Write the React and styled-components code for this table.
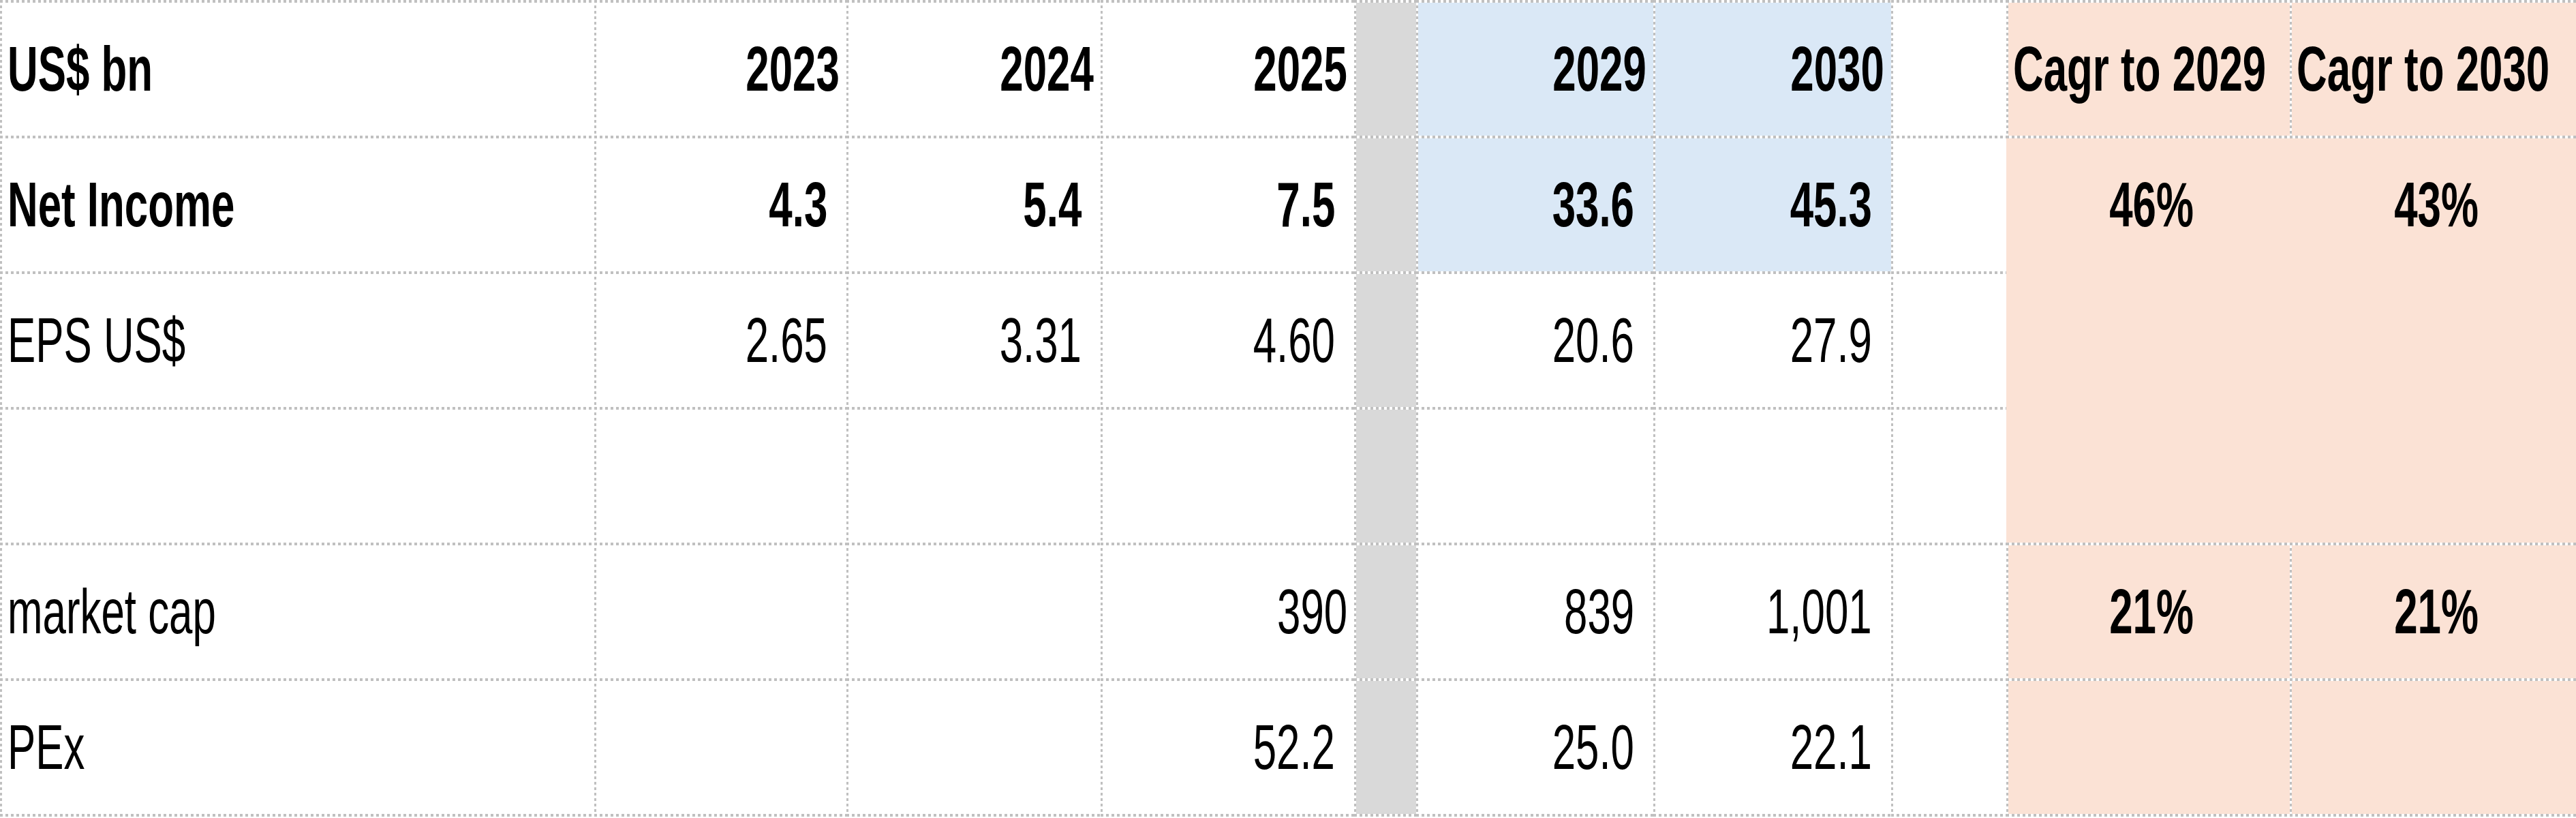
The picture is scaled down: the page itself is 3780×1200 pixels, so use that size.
import React from 'react';
import styled, { createGlobalStyle } from 'styled-components';

const GlobalStyle = createGlobalStyle`
  html, body {
    margin: 0;
    padding: 0;
    background: #fff;
  }
`;

const LINE = '#c0c0c0';

const fills = {
  white: '#ffffff',
  gray: '#d9d9d9',
  blue: '#dae8f6',
  salmon: '#fbe2d5',
};

const justify = {
  left: 'flex-start',
  right: 'flex-end',
  center: 'center',
};

const hLine = (pos) =>
  `repeating-linear-gradient(90deg, ${LINE} 0 4px, #fff 4px 8px) ${pos} left / 100% 4px no-repeat`;
const vLine = `repeating-linear-gradient(180deg, ${LINE} 0 4px, #fff 4px 8px) top left / 3px 100% no-repeat`;

const Sheet = styled.div`
  display: grid;
  grid-template-columns: 872px 370px 373px 372px 91px 348px 349px 169px 416px 420px;
  grid-template-rows: repeat(5, 199px) 203px;
  width: 3780px;
  font-family: 'Liberation Sans', Arial, sans-serif;
  color: #000;
`;

const Cell = styled.div`
  display: flex;
  align-items: center;
  justify-content: ${(p) => justify[p.$align]};
  box-sizing: border-box;
  padding: 4px ${(p) => p.$pr}px ${(p) => (p.$bottom ? 4 : 0)}px ${(p) => p.$pl}px;
  overflow: visible;
  background: ${(p) =>
    [
      p.$top && hLine('top'),
      p.$bottom && hLine('bottom'),
      p.$left && vLine,
      fills[p.$fill],
    ]
      .filter(Boolean)
      .join(', ')};
`;

const Txt = styled.span`
  display: inline-block;
  white-space: nowrap;
  font-size: 93px;
  line-height: 1;
  font-weight: ${(p) => (p.$bold ? 700 : 400)};
  transform: scaleX(0.665);
  transform-origin: ${(p) => p.$align} center;
`;

const rows = [
  {
    label: 'US$ bn',
    bold: true,
    hist: ['2023', '2024', '2025'],
    fc: ['2029', '2030'],
    blue: true,
    pad: 10,
    cagr: ['Cagr to 2029', 'Cagr to 2030'],
    cagrAlign: 'left',
    salmon: 'full',
  },
  {
    label: 'Net Income',
    bold: true,
    hist: ['4.3', '5.4', '7.5'],
    fc: ['33.6', '45.3'],
    blue: true,
    pad: 28,
    cagr: ['46%', '43%'],
    salmon: 'top',
  },
  {
    label: 'EPS US$',
    hist: ['2.65', '3.31', '4.60'],
    fc: ['20.6', '27.9'],
    pad: 28,
    salmon: 'none',
  },
  {
    label: '',
    hist: ['', '', ''],
    fc: ['', ''],
    pad: 28,
    salmon: 'none',
  },
  {
    label: 'market cap',
    hist: ['', '', '390'],
    histPad: 10,
    fc: ['839', '1,001'],
    pad: 28,
    cagr: ['21%', '21%'],
    cagrBold: true,
    salmon: 'full',
  },
  {
    label: 'PEx',
    hist: ['', '', '52.2'],
    fc: ['25.0', '22.1'],
    pad: 28,
    salmon: 'full',
  },
];

const SheetCell = ({ text, align = 'right', bold, fill = 'white', pl = 11, pr = 10, top = true, left = true, bottom }) => (
  <Cell $align={align} $fill={fill} $pl={pl} $pr={pr} $top={top} $left={left} $bottom={bottom}>
    {text ? (
      <Txt $align={align} $bold={bold}>
        {text}
      </Txt>
    ) : null}
  </Cell>
);

const Row = ({ row, last }) => {
  const cagr = row.cagr || ['', ''];
  const cagrAlign = row.cagrAlign || 'center';
  const sTop = row.salmon !== 'none';
  const sLeft = row.salmon === 'full';

  return (
    <>
      <SheetCell text={row.label} align="left" bold={row.bold} bottom={last} />
      {row.hist.map((v, i) => (
        <SheetCell key={`h${i}`} text={v} bold={row.bold} pr={row.histPad || row.pad} bottom={last} />
      ))}
      <SheetCell fill="gray" bottom={last} />
      {row.fc.map((v, i) => (
        <SheetCell
          key={`f${i}`}
          text={v}
          bold={row.bold}
          fill={row.blue ? 'blue' : 'white'}
          pr={row.pad}
          bottom={last}
        />
      ))}
      <SheetCell bottom={last} />
      {cagr.map((v, i) => (
        <SheetCell
          key={`c${i}`}
          text={v}
          align={cagrAlign}
          bold={row.bold || row.cagrBold}
          fill="salmon"
          pl={10}
          pr={0}
          top={sTop}
          left={sLeft}
          bottom={last}
        />
      ))}
    </>
  );
};

export default function App() {
  return (
    <>
      <GlobalStyle />
      <Sheet>
        {rows.map((row, i) => (
          <Row key={i} row={row} last={i === rows.length - 1} />
        ))}
      </Sheet>
    </>
  );
}
